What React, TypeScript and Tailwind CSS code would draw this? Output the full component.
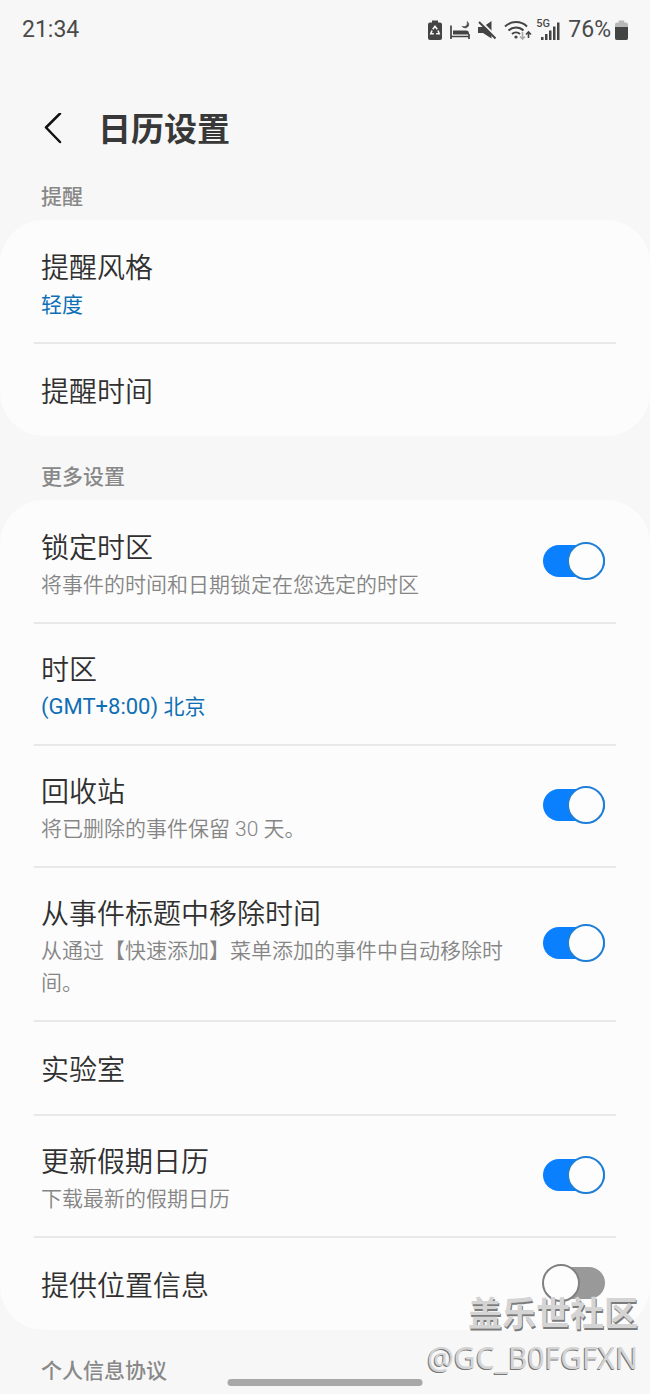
import { useState } from 'react';

interface SettingItem {
    id: string;
    title: string;
    offset?: string;
    value?: string;
    description?: string;
    enabled?: boolean;
}

const REMINDER_ITEMS: SettingItem[] = [
    { id: 'style', title: '提醒风格', value: '轻度' },
    { id: 'time', title: '提醒时间' },
];

const MORE_ITEMS: SettingItem[] = [
    { id: 'lock-zone', title: '锁定时区', description: '将事件的时间和日期锁定在您选定的时区', enabled: true },
    { id: 'zone', title: '时区', offset: '(GMT+8:00) ', value: '北京' },
    { id: 'trash', title: '回收站', description: '将已删除的事件保留 30 天。', enabled: true },
    { id: 'strip-time', title: '从事件标题中移除时间', description: '从通过【快速添加】菜单添加的事件中自动移除时间。', enabled: true },
    { id: 'labs', title: '实验室' },
    { id: 'holidays', title: '更新假期日历', description: '下载最新的假期日历', enabled: true },
    { id: 'location', title: '提供位置信息', enabled: false },
];

function StatusBar() {
    return (
        <div className="flex h-15 items-center justify-between px-[22px] text-[23px] text-[#4a4a4a]">
            <span>21:34</span>
            <div className="flex items-center gap-2">
                {/* Battery recycle */}
                <svg width="14" height="20" viewBox="0 0 14 20" fill="none">
                    <path d="M4 0.5h6v2h2a2 2 0 0 1 2 2V18a2 2 0 0 1-2 2H2a2 2 0 0 1-2-2V4.500a2 2 0 0 1 2-2h2z" fill="#444" />
                    <path d="M4.800 9.300 7 6.300l2.200 3M10 10.500l1.200 3.200H8.200M5.800 13.700h-3l1.200-3.200" stroke="#f7f7f7" strokeWidth="1.600" />
                </svg>
                {/* Sleep mode */}
                <svg width="20" height="20" viewBox="0 0 20 20" fill="none">
                    <path d="M1 5.500V19M1 16.500h18M19 19v-5" stroke="#444" strokeWidth="1.700" />
                    <path d="M3 10.500h13a3 3 0 0 1 3 3V14.500H3z" fill="#444" />
                    <path d="M17 1.500c1.300 3.500-1.500 6-5 4.800 1.500 2.200 5 2.200 6.400-.2.900-1.700.200-3.700-1.400-4.600z" fill="#444" stroke="#444" strokeWidth="0.500" />
                </svg>
                {/* Muted */}
                <svg width="18" height="20" viewBox="0 0 18 20" fill="none">
                    <path d="M0 7h5l8.500-6v17.500L5 13H0z" fill="#444" />
                    <path d="M2.500 1 18.500 17" stroke="#f7f7f7" strokeWidth="2" />
                    <path d="M1 2l16.500 16.500" stroke="#444" strokeWidth="2" />
                </svg>
                {/* Wi-Fi */}
                <svg width="28" height="20" viewBox="0 0 28 20" fill="none">
                    <path d="M1 6.500a16 16 0 0 1 22 0M4.500 10.500a11 11 0 0 1 15 0M8 14a6 6 0 0 1 8 0" stroke="#444" strokeWidth="2" />
                    <circle cx="12" cy="17" r="1.600" fill="#444" />
                    <path d="M18.500 12v7M16 16.500l2.500 2.500 2.500-2.500" stroke="#aaa" strokeWidth="1.600" />
                    <path d="M24.500 18v-6M22 14.500l2.500-2.500 2.500 2.500" stroke="#444" strokeWidth="1.600" />
                </svg>
                {/* Signal */}
                <div className="relative -ml-1">
                    <span className="absolute -top-1 left-0 text-[11px] leading-4 font-medium">5G</span>
                    <svg width="24" height="20" viewBox="0 0 24 20" fill="#444">
                        <path d="M5 17h2.500v3H5zM9 14h2.500v6H9zM13 10.500h2.500V20H13zM17 6.500h2.500V20H17zM21 2.500h2.500V20H21z" />
                    </svg>
                </div>
                <div className="flex items-center gap-1">
                    <span>76%</span>
                    <svg width="13" height="20" viewBox="0 0 14 20" preserveAspectRatio="none">
                        <path d="M4 0.500h6v2h2a2 2 0 0 1 2 2V18a2 2 0 0 1-2 2H2a2 2 0 0 1-2-2V4.500a2 2 0 0 1 2-2h2z" fill="#b8b8b8" />
                        <path d="M0 7h14v11a2 2 0 0 1-2 2H2a2 2 0 0 1-2-2z" fill="#444" />
                    </svg>
                </div>
            </div>
        </div>
    );
}

function ItemText({ item }: { item: SettingItem }) {
    return (
        <span className="min-w-0 flex-1">
            <span className="block text-[28px] leading-10 font-[350] text-[#303030]">{item.title}</span>
            {item.value && (
                <span className="block text-[21px] leading-8 text-[#0f6fb5]">
                    {item.offset && <span className="text-[22px]">{item.offset}</span>}
                    {item.value}
                </span>
            )}
            {item.description && <span className="block text-[21px] leading-8 font-[350] text-[#858585]">{item.description}</span>}
        </span>
    );
}

function SettingRow({ item }: { item: SettingItem }) {
    const [on, setOn] = useState(item.enabled ?? false);
    const hasSub = Boolean(item.value || item.description);
    const padding = hasSub ? 'pt-[27px] pb-[21px]' : 'pt-[29px] pb-[23px]';
    const rowClass = `flex w-full items-center gap-8 pl-[7px] pr-[11px] text-left ${padding}`;

    return (
        <li className="border-t-2 border-[#e8e8e8] first:border-transparent">
            {item.enabled === undefined ? (
                <button type="button" className={rowClass}>
                    <ItemText item={item} />
                </button>
            ) : (
                <label className={rowClass}>
                    <ItemText item={item} />
                    <span className="relative mb-2 flex h-8 w-[62px] shrink-0 items-center">
                        <input
                            type="checkbox"
                            role="switch"
                            checked={on}
                            onChange={(e) => setOn(e.target.checked)}
                            className="peer h-8 w-full appearance-none rounded-full bg-[#999999] checked:bg-[#0a80ff]"
                        />
                        <span className="pointer-events-none absolute -left-px size-[38px] rounded-full border-2 border-[#808080] bg-[#fdfdfd] peer-checked:right-0 peer-checked:left-auto peer-checked:border-[#1f7fd6]" />
                    </span>
                </label>
            )}
        </li>
    );
}

function Section({ title, items }: { title: string; items: SettingItem[] }) {
    return (
        <section>
            <h2 className="px-[41px] pt-[25px] pb-[7px] text-[21px] leading-8 font-medium text-[#888888]">{title}</h2>
            {items.length > 0 && (
                <ul className="rounded-[44px] bg-[#fcfcfc] px-[34px]">
                    {items.map((item) => (
                        <SettingRow key={item.id} item={item} />
                    ))}
                </ul>
            )}
        </section>
    );
}

export default function App() {
    return (
        <div className="relative min-h-screen overflow-hidden bg-[#f7f7f7] font-[Roboto,'Noto_Sans_CJK_SC',sans-serif]">
            <StatusBar />

            {/* Header */}
            <header className="flex items-center gap-[34px] pt-11 pl-[42px]">
                <button type="button" aria-label="返回">
                    <svg width="22" height="34" viewBox="0 0 22 34" fill="none" stroke="#111" strokeWidth="2.500" strokeLinecap="round" strokeLinejoin="round">
                        <path d="M18 0.500 4 14.500l14 14.500" />
                    </svg>
                </button>
                <h1 className="text-[33px] leading-[52px] font-bold text-[#383838]">日历设置</h1>
            </header>

            <main>
                <Section title="提醒" items={REMINDER_ITEMS} />
                <Section title="更多设置" items={MORE_ITEMS} />
                <Section title="个人信息协议" items={[]} />
            </main>

            {/* Home indicator */}
            <div className="absolute bottom-2 left-1/2 h-[7px] w-[30%] -translate-x-1/2 rounded-full bg-[#a8a8a8]" />

            {/* Community mark */}
            <div className="pointer-events-none absolute right-3 bottom-4 text-right text-[#d4d4d4]">
                <div className="text-[34px] leading-[48px] font-bold [text-shadow:1px_2px_0_#7c7c7c]">盖乐世社区</div>
                <div className="font-['Noto_Sans',sans-serif] text-[30px] leading-10 [text-shadow:-1px_1px_0_#777]">@GC_B0FGFXN</div>
            </div>
        </div>
    );
}
